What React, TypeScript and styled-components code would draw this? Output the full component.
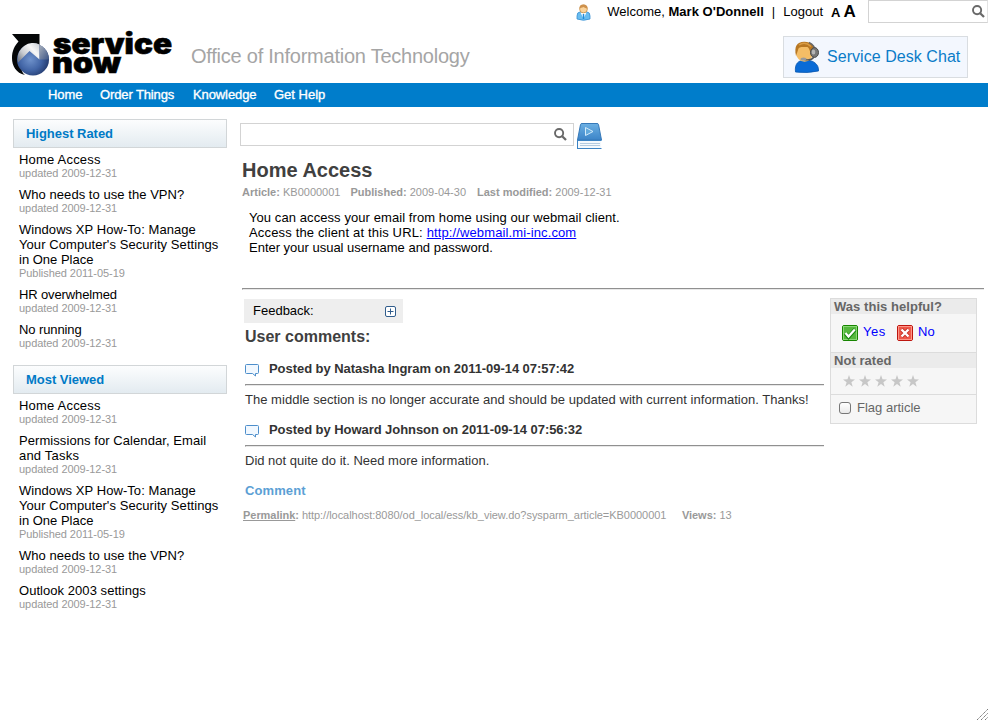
import React from 'react';
import styled, { createGlobalStyle } from 'styled-components';

const GlobalStyle = createGlobalStyle`
  * { box-sizing: border-box; }
  body { margin: 0; background: #fff; font: 13px/15px "Liberation Sans", Arial, sans-serif; color: #000; overflow: hidden; }
  h1, h2, p, ul { margin: 0; padding: 0; }
  svg { display: block; flex: none; overflow: visible; }
`;

const Page = styled.div`
  height: 720px;
  display: flex;
  flex-direction: column;
`;
const Header = styled.header`
  height: 83px;
  display: grid;
  grid-template-rows: 30px 53px;
`;
const UserBar = styled.div`
  display: flex;
  justify-content: flex-end;
  align-items: flex-start;
  height: 30px;
`;
const Label = styled.span<{ $gap?: number }>`
  margin-left: ${p => p.$gap ?? 0}px;
  white-space: pre;
`;
const Greeting = styled.div`
  display: flex;
  padding-top: 4px;
  margin-left: 16px;
  white-space: pre;
`;
const UserName = styled.b`
  letter-spacing: 0.04px;
`;
const FontSizer = styled.div`
  display: flex;
  align-items: baseline;
  gap: 3px;
  margin: 3px 0 0 8px;
  width: 37px;
  font-weight: bold;
`;
const Letter = styled.span<{ $size: number }>`
  font-size: ${p => p.$size}px;
  line-height: 17px;
`;
const SearchBox = styled.div<{ $w: number; $pad: number; $top?: boolean }>`
  width: ${p => p.$w}px;
  height: 23px;
  border: 1px solid #d3d3d3;
  display: flex;
  align-items: center;
  justify-content: flex-end;
  padding-right: ${p => p.$pad}px;
  ${p => p.$top && 'border-right-color: #e3e3e3;'}
`;
const Brand = styled.div`
  display: flex;
  align-items: flex-start;
  padding-left: 10px;
`;
const Tagline = styled.div`
  font-size: 20px;
  line-height: 24px;
  color: #a5a5a5;
  margin: 14px 0 0 17px;
  letter-spacing: -0.24px;
`;
const ChatButton = styled.div`
  margin: 6px 20px 0 auto;
  width: 185px;
  height: 42px;
  border: 1px solid #d9dde1;
  background: #f3f7fe;
  display: flex;
  align-items: center;
  padding-left: 9px;
  gap: 6px;
  font-size: 16px;
  line-height: 20px;
  letter-spacing: 0.05px;
  color: #0a7cc8;
  white-space: nowrap;
`;
const Nav = styled.nav`
  height: 24px;
  background: #007dcb;
  display: flex;
  gap: 18px;
  padding: 4px 0 0 48px;
`;
const NavItem = styled.a<{ $w: number; $ls: number }>`
  color: #fff;
  width: ${p => p.$w}px;
  white-space: nowrap;
  letter-spacing: ${p => p.$ls}px;
  -webkit-text-stroke: 0.35px #fff;
`;
const Body = styled.div`
  flex: 1;
  display: flex;
  position: relative;
`;
const Sidebar = styled.aside`
  width: 214px;
  margin: 12px 13px 0 13px;
  flex: none;
`;
const PanelTitle = styled.h2`
  height: 29px;
  border: 1px solid #d2d6d8;
  background: linear-gradient(#fcfdfe, #e3ebf0);
  color: #007ac6;
  font-size: 13px;
  line-height: 27px;
  padding-left: 12px;
  letter-spacing: -0.03px;
`;
const Links = styled.ul`
  list-style: none;
  padding: 4px 0 8px 6px;
`;
const LinkItem = styled.li`
  margin-bottom: 7px;
  white-space: nowrap;
`;
const Updated = styled.div`
  font-size: 11px;
  line-height: 13px;
  color: #999;
  letter-spacing: -0.05px;
`;
const Line = styled.div<{ $ls: number }>`
  letter-spacing: ${p => p.$ls}px;
`;
const Main = styled.main`
  flex: 1;
  padding-top: 16px;
`;
const SearchRow = styled.div`
  display: flex;
  gap: 3px;
  height: 35px;
`;
const Title = styled.h1`
  font-size: 20px;
  line-height: 24px;
  color: #404040;
  padding: 0 0 4px 2px;
`;
const Meta = styled.div<{ $left: number; $ls: number }>`
  display: flex;
  font-size: 11px;
  line-height: 13px;
  color: #999;
  margin-left: ${p => p.$left}px;
  letter-spacing: ${p => p.$ls}px;
  white-space: pre;
`;
const Article = styled.div`
  padding: 11px 0 0 9px;
  height: 89px;
`;
const Paragraph = styled.p<{ $ls: number }>`
  letter-spacing: ${p => p.$ls}px;
`;
const Url = styled.a`
  color: #00f;
  text-decoration: underline;
  letter-spacing: 0.12px;
`;
const Rule = styled.div`
  height: 2px;
  border-top: 1px solid #909090;
  border-left: 1px solid #999;
  border-bottom: 1px solid #e8e8e8;
`;
const RuleWrap = styled.div`
  padding: 0 4px 0 2px;
`;
const Columns = styled.div`
  display: flex;
  justify-content: space-between;
  padding: 8px 11px 0 4px;
`;
const Discussion = styled.section`
  width: 580px;
  padding-top: 1px;
  color: #333;
`;
const Feedback = styled.div`
  width: 159px;
  height: 24px;
  background: #eee;
  color: #000;
  display: flex;
  align-items: center;
  justify-content: space-between;
  padding: 0 6px 2px 9px;
  svg { margin-top: 3px; }
`;
const CommentsTitle = styled.h2`
  font-size: 16px;
  line-height: 20px;
  padding: 4px 0 0 1px;
  color: #404040;
`;
const Post = styled.div`
  padding-left: 1px;
`;
const PostHead = styled.div`
  display: flex;
  align-items: flex-start;
  height: 23px;
  gap: 10px;
  font-weight: bold;
  letter-spacing: -0.055px;
`;
const PostText = styled.p<{ $ls: number }>`
  padding-top: 6px;
  height: 36px;
  white-space: nowrap;
  letter-spacing: ${p => p.$ls}px;
`;
const CommentLink = styled.a`
  display: block;
  font-weight: bold;
  color: #5b9fd5;
  padding: 0 0 11px 1px;
  letter-spacing: 0.1px;
`;
const Perma = styled.b`
  text-decoration: underline;
`;
const Rating = styled.aside`
  width: 147px;
  height: 126px;
  border: 1px solid #dcdcdc;
  background: #f6f6f6;
  color: #666;
`;
const RatingTitle = styled.div`
  background: #ebebeb;
  font-weight: bold;
  height: 15px;
  padding-left: 3px;
  letter-spacing: 0.05px;
`;
const RatingRow = styled.div<{ $h: number; $pl: number; $gap: number; $pb?: number }>`
  display: flex;
  align-items: center;
  height: ${p => p.$h}px;
  padding: 0 0 ${p => p.$pb ?? 0}px ${p => p.$pl}px;
  gap: ${p => p.$gap}px;
  border-bottom: 1px solid #dcdcdc;
  &:last-child { border-bottom: 0; }
`;
const Vote = styled.a<{ $ls: number }>`
  width: 46px;
  color: #00f;
  display: flex;
  gap: 5px;
  align-items: flex-start;
  letter-spacing: ${p => p.$ls}px;
  svg { margin-top: 1px; }
`;
const Check = styled.span`
  width: 12px;
  height: 12px;
  margin-top: 1px;
  border: 1px solid #777;
  border-radius: 3px;
  background: linear-gradient(#fff, #e9e9e9);
`;
const Grip = styled.div`
  position: absolute;
  right: 0;
  bottom: 0;
`;
const Bubble = styled.span`
  padding-top: 3px;
`;
const Posts = styled.div`
  padding-top: 14px;
`;
const IconDrop = styled.span`
  padding-top: 4px;
`;

const Magnifier = () => (
  <svg width="13" height="13" viewBox="0 0 13 13" fill="none" stroke="#696969">
    <circle cx="5.1" cy="5.1" r="4.1" strokeWidth="1.9" />
    <path d="M8.2 8.2 12 12" strokeWidth="2.3" />
  </svg>
);

const Logo = () => (
  <svg width="164" height="48" viewBox="10 30 164 48">
    <defs>
      <radialGradient id="ball" cx=".42" cy=".5" r=".62">
        <stop offset="0" stopColor="#6f92cb" />
        <stop offset=".55" stopColor="#4265a6" />
        <stop offset="1" stopColor="#1f3567" />
      </radialGradient>
      <linearGradient id="gloss" x1="0" y1=".8" x2="1" y2="0">
        <stop offset="0" stopColor="#7b828e" />
        <stop offset=".3" stopColor="#c9ccd1" />
        <stop offset=".65" stopColor="#f7f7f7" />
        <stop offset="1" stopColor="#c9ced6" />
      </linearGradient>
      <linearGradient id="rim" x1="0" y1="0" x2="1" y2="1">
        <stop offset="0" stopColor="#a9b1bd" />
        <stop offset="1" stopColor="#3c5485" />
      </linearGradient>
    </defs>
    <path d="M12 34H39.500V46L22 68Q21 72 25 75C16 73 12 66 12 58C12 51 14.500 46 18.500 41.500Z" fill="#050708" />
    <circle cx="33" cy="59.500" r="16" fill="url(#ball)" />
    <path d="M17.500 59A15.500 15.500 0 0 1 39.500 44.500V59.500L29.500 51 18 62.500Z" fill="url(#gloss)" />
    <path d="M39.500 44.800A16 16 0 0 1 49 59.500L39.500 59.500Z" fill="url(#rim)" />
    <g fontFamily="Inter, Liberation Sans, sans-serif" fontWeight="900" fontSize="28" stroke="#000" strokeWidth=".6">
      <text x="53" y="54.300" textLength="119" lengthAdjust="spacingAndGlyphs">service</text>
      <text x="52" y="72.800" textLength="69" lengthAdjust="spacingAndGlyphs">now</text>
    </g>
  </svg>
);

const UserIcon = () => (
  <svg width="15" height="17" viewBox="0 0 15 17">
    <path d="M1 15V12Q1 8 4 8H11Q14 8 14 12V15Q7.500 17.500 1 15Z" fill="#69bdf0" stroke="#398fd2" strokeWidth=".8" />
    <path d="M4.500 8.500 7.500 14.500 10.500 8.500Z" fill="#fff" />
    <path d="M7.500 10V15" stroke="#218bd7" strokeWidth="1.500" />
    <circle cx="7.500" cy="5" r="3.900" fill="#fbd49b" stroke="#bd8644" strokeWidth=".7" />
    <path d="M3.700 4.800C3 1.700 5 .4 7.500.4S12 2 11.300 4.800C10 4 8.500 4 7.500 3 6 4 4.500 3.500 3.700 4.800Z" fill="#ce914c" />
  </svg>
);

const AgentIcon = () => (
  <svg width="28" height="32" viewBox="0 0 28 32">
    <path d="M2.500 31C1.500 23 5 19 12.500 19S26 23 25.500 30Q14 32.500 2.500 31Z" fill="#096bd6" stroke="#0755af" strokeWidth=".8" />
    <ellipse cx="11.500" cy="11.500" rx="8.600" ry="9.300" fill="#f4bd66" />
    <path d="M3 15C1 5 4 1 11 .8C18 .6 22 4 21.500 12L18.500 14C17 12 17 8 14.500 6C10 6.500 6 5 5 9Z" fill="#b87722" />
    <path d="M6 4Q12 0 18 5.500" stroke="#d99c45" strokeWidth="1.500" fill="none" />
    <path d="M16 1.500Q22 4 22 11" stroke="#666" strokeWidth="1.500" fill="none" />
    <ellipse cx="21.500" cy="11.500" rx="4" ry="4.900" fill="#777" stroke="#4b4b4b" />
    <ellipse cx="20.500" cy="11" rx="1.800" ry="2.600" fill="#b5b5b5" />
    <path d="M21 16Q18 20 11.500 18.500" stroke="#555" strokeWidth="1.300" fill="none" />
    <ellipse cx="10.500" cy="18" rx="3" ry="1.600" fill="#9a9a9a" />
  </svg>
);

const BookIcon = () => (
  <svg width="25" height="26" viewBox="0 0 25 26">
    <defs>
      <linearGradient id="cover" x1="0" y1="0" x2="0" y2="1">
        <stop offset="0" stopColor="#6cb0e3" />
        <stop offset="1" stopColor="#3c84c8" />
      </linearGradient>
    </defs>
    <path d="M.5 17 3.500 1.500Q3.700.5 5 .5H20Q21.300.5 21.500 1.500L24.500 17Z" fill="url(#cover)" stroke="#3679b9" />
    <path d="M1 18H24V25H1Z" fill="#f4f9fd" />
    <path d="M3 20.500H23M3 22.500H23" stroke="#b4cbe0" />
    <path d="M.5 17.500H24.500M.5 25.500H24.500M.5 17V26" stroke="#3c83c4" />
    <path d="M8.500 4.500V12.500L16 8.500Z" fill="#62a9dc" stroke="#d4ebfa" />
  </svg>
);

const PlusIcon = () => (
  <svg width="12" height="12" viewBox="0 0 12 12" fill="none" stroke="#315d8c">
    <rect x=".5" y=".5" width="10" height="10" rx="1.500" fill="#fff" />
    <path d="M5.500 2.500V8.500M2.500 5.500H8.500" />
  </svg>
);

const BubbleIcon = () => (
  <svg width="14" height="13" viewBox="0 0 14 13">
    <path d="M1.500.5H12.500Q13.500.5 13.500 1.500V8.500Q13.500 9.500 12.500 9.500H10.500V12L7.500 9.500H1.500Q.5 9.500.5 8.500V1.500Q.5.5 1.500.5Z" fill="#f1f8ff" stroke="#4d8ecb" />
  </svg>
);

const YesIcon = () => (
  <svg width="16" height="16" viewBox="0 0 16 16">
    <rect x=".5" y=".5" width="15" height="15" rx="1.500" fill="#55b83e" stroke="#178500" />
    <rect x="1.500" y="1.500" width="13" height="13" fill="none" stroke="#89d875" />
    <path d="M3.500 8.500 6.500 12 13 4.500" fill="none" stroke="#16860d" strokeWidth="4" />
    <path d="M3.500 8 6.500 11.500 12.800 4.500" fill="none" stroke="#fff" strokeWidth="2.200" />
  </svg>
);
const NoIcon = () => (
  <svg width="16" height="16" viewBox="0 0 16 16">
    <rect x=".5" y=".5" width="15" height="15" rx="1.500" fill="#ee584a" stroke="#bd160f" />
    <rect x="1.500" y="1.500" width="13" height="13" fill="none" stroke="#ff9587" />
    <path d="M4.500 4.500 11.500 11.500M11.500 4.500 4.500 11.500" stroke="#c63025" strokeWidth="4" />
    <path d="M4.500 4.500 11.500 11.500M11.500 4.500 4.500 11.500" stroke="#fff" strokeWidth="2.400" />
  </svg>
);
const Star = () => (
  <svg width="12" height="12" viewBox="0 0 12 12">
    <path d="M6 0 7.500 4.300 12 4.400 8.400 7.200 9.700 11.700 6 9 2.300 11.700 3.600 7.200 0 4.400 4.500 4.300Z" fill="#c7c7c7" />
  </svg>
);

type Entry = { lines: [string, number][]; note: string };
const upd = 'updated 2009-12-31';
const home: Entry = { lines: [['Home Access', 0.2]], note: upd };
const vpn: Entry = { lines: [['Who needs to use the VPN?', 0.05]], note: upd };
const xp: Entry = {
  lines: [['Windows XP How-To: Manage', 0.06], ["Your Computer's Security Settings", 0.07], ['in One Place', 0]],
  note: 'Published 2011-05-19',
};
const highest: Entry[] = [
  home,
  vpn,
  xp,
  { lines: [['HR overwhelmed', -0.13]], note: upd },
  { lines: [['No running', -0.1]], note: upd },
];
const viewed: Entry[] = [
  home,
  { lines: [['Permissions for Calendar, Email', 0.07], ['and Tasks', 0.2]], note: upd },
  xp,
  vpn,
  { lines: [['Outlook 2003 settings', 0.05]], note: upd },
];

const Panel = ({ title, items }: { title: string; items: Entry[] }) => (
  <section>
    <PanelTitle>{title}</PanelTitle>
    <Links>
      {items.map((item, i) => (
        <LinkItem key={i}>
          {item.lines.map(([text, ls]) => <Line key={text} $ls={ls}>{text}</Line>)}
          <Updated>{item.note}</Updated>
        </LinkItem>
      ))}
    </Links>
  </section>
);

const Comment = ({ head, text, ls }: { head: string; text: string; ls: number }) => (
  <Post>
    <PostHead><Bubble><BubbleIcon /></Bubble>{head}</PostHead>
    <Rule />
    <PostText $ls={ls}>{text}</PostText>
  </Post>
);

export default function App() {
  return (
    <Page>
      <GlobalStyle />
      <Header>
        <UserBar>
          <IconDrop><UserIcon /></IconDrop>
          <Greeting>
            <Label>Welcome, </Label><UserName>Mark O'Donnell</UserName>
            <Label $gap={8}>|</Label><Label $gap={8}>Logout</Label>
          </Greeting>
          <FontSizer><Letter $size={13}>A</Letter><Letter $size={17}>A</Letter></FontSizer>
          <SearchBox $w={120} $pad={2} $top><Magnifier /></SearchBox>
        </UserBar>
        <Brand>
          <Logo />
          <Tagline>Office of Information Technology</Tagline>
          <ChatButton><AgentIcon />Service Desk Chat</ChatButton>
        </Brand>
      </Header>
      <Nav>
        <NavItem $w={34} $ls={-0.1}>Home</NavItem>
        <NavItem $w={75} $ls={-0.12}>Order Things</NavItem>
        <NavItem $w={63} $ls={-0.1}>Knowledge</NavItem>
        <NavItem $w={51} $ls={0}>Get Help</NavItem>
      </Nav>
      <Body>
        <Sidebar>
          <Panel title="Highest Rated" items={highest} />
          <Panel title="Most Viewed" items={viewed} />
        </Sidebar>
        <Main>
          <SearchRow>
            <SearchBox $w={334} $pad={6}><Magnifier /></SearchBox>
            <BookIcon />
          </SearchRow>
          <Title>Home Access</Title>
          <Meta $left={2} $ls={0}>
            <b>Article: </b>KB0000001<Label $gap={10}><b>Published: </b>2009-04-30</Label>
            <Label $gap={11}><b>Last modified: </b>2009-12-31</Label>
          </Meta>
          <Article>
            <Paragraph $ls={0.08}>You can access your email from home using our webmail client.</Paragraph>
            <Paragraph $ls={0.16}>Access the client at this URL: <Url>http://webmail.mi-inc.com</Url></Paragraph>
            <Paragraph $ls={-0.01}>Enter your usual username and password.</Paragraph>
          </Article>
          <RuleWrap><Rule /></RuleWrap>
          <Columns>
            <Discussion>
              <Feedback>Feedback:<PlusIcon /></Feedback>
              <CommentsTitle>User comments:</CommentsTitle>
              <Posts>
                <Comment head="Posted by Natasha Ingram on 2011-09-14 07:57:42" ls={0.025}
                  text="The middle section is no longer accurate and should be updated with current information. Thanks!" />
                <Comment head="Posted by Howard Johnson on 2011-09-14 07:56:32" ls={0}
                  text="Did not quite do it. Need more information." />
              </Posts>
              <CommentLink>Comment</CommentLink>
              <Meta $left={-1} $ls={-0.038}>
                <Perma>Permalink</Perma><b>: </b>http://localhost:8080/od_local/ess/kb_view.do?sysparm_article=KB0000001
                <Label $gap={15.5}><b>Views: </b>13</Label>
              </Meta>
            </Discussion>
            <Rating>
              <RatingTitle>Was this helpful?</RatingTitle>
              <RatingRow $h={39} $pl={11} $gap={9} $pb={2}>
                <Vote $ls={0.5}><YesIcon />Yes</Vote>
                <Vote $ls={0}><NoIcon />No</Vote>
              </RatingRow>
              <RatingTitle>Not rated</RatingTitle>
              <RatingRow $h={27} $pl={12} $gap={4}>
                <Star /><Star /><Star /><Star /><Star />
              </RatingRow>
              <RatingRow $h={27} $pl={8} $gap={6} $pb={2}><Check />Flag article</RatingRow>
            </Rating>
          </Columns>
        </Main>
        <Grip>
          <svg width="12" height="12" viewBox="0 0 12 12" stroke="#777" strokeDasharray="1.500 .5">
            <path d="M1 12 12 1M5 12 12 5M9 12 12 9" />
          </svg>
        </Grip>
      </Body>
    </Page>
  );
}
